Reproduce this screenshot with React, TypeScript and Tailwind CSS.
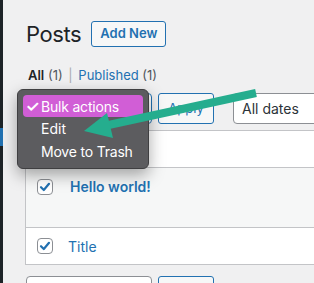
import React from 'react';

// small checkbox, checked state like WP list tables
const Checkbox = () => (
  <span className="flex h-[16px] w-[16px] items-center justify-center rounded-[4px] border border-[#8c8f94] bg-white">
    <svg width="12" height="12" viewBox="0 0 12 12">
      <path d="M2 6.2 L4.8 9 L10 2.8" fill="none" stroke="#2271b1" strokeWidth="2.2" strokeLinecap="round" strokeLinejoin="round" />
    </svg>
  </span>
);

const SelectBox = ({ label, className }: { label?: string; className?: string }) => (
  <div className={`flex h-[31px] items-center rounded-[4px] border border-[#8c8f94] bg-white pl-[8px] text-[14px] text-[#2c3338] ${className ?? ''}`}>
    {label}
  </div>
);

const ApplyButton = () => (
  <div className="flex h-[31px] w-[56px] items-center justify-center rounded-[3px] border border-[#2271b1] bg-[#f6f7f7] text-[13px] text-[#2271b1]">
    Apply
  </div>
);

export default function App() {
  return (
    <div className="relative flex h-[283px] w-[314px] overflow-hidden bg-[#f0f0f1] font-[Inter,sans-serif]">
      {/* admin menu edge */}
      <div className="flex w-[3px] shrink-0 flex-col bg-[#1d2327]">
        <div className="mt-[128px] h-[18px] bg-[#2271b1]" />
      </div>

      <main className="w-[420px] shrink-0 pl-[22px] pt-[21px]">
        <div className="flex items-center">
          <h1 className="ml-[1px] text-[22px] leading-[26px] tracking-[-0.4px] text-[#1d2327]">Posts</h1>
          <div className="ml-[10px] flex h-[26px] items-center rounded-[3px] border border-[#2271b1] bg-[#f6f7f7] px-[8px] text-[13px] font-semibold text-[#2271b1]">
            Add New
          </div>
        </div>

        <div className="ml-[3px] mt-[20px] text-[13px] leading-[16px] text-[#50575e]">
          <span className="font-semibold text-[#1d2327]">All</span> (1) <span className="px-[2px] text-[#a7aaad]">|</span>{' '}
          <span className="text-[#2271b1]">Published</span> (1)
        </div>

        <div className="ml-[1px] mt-[10px] flex items-center">
          <SelectBox className="w-[126px] border-[#2271b1]" />
          <div className="ml-[6px]">
            <ApplyButton />
          </div>
          <SelectBox label="All dates" className="ml-[19px] w-[140px]" />
        </div>

        <div className="mt-[6px] border border-[#c3c4c7] bg-white">
          <div className="flex h-[37px] items-center border-b border-[#c3c4c7] pl-[11px]">
            <Checkbox />
            <span className="ml-[15px] text-[14px] text-[#2271b1]">Title</span>
          </div>
          <div className="flex h-[59px] items-start bg-[#f6f7f7] pl-[11px] pt-[11px]">
            <Checkbox />
            <span className="ml-[17px] text-[14px] font-semibold leading-[16px] text-[#2271b1]">Hello world!</span>
          </div>
          <div className="flex h-[37px] items-center border-t border-[#c3c4c7] pl-[11px]">
            <Checkbox />
            <span className="ml-[15px] text-[14px] text-[#2271b1]">Title</span>
          </div>
        </div>

        <div className="ml-[1px] mt-[11px] flex items-center">
          <SelectBox className="w-[126px]" />
          <div className="ml-[6px]">
            <ApplyButton />
          </div>
        </div>
      </main>

      {/* open bulk actions menu */}
      <div className="absolute left-[17px] top-[89px] w-[132px] rounded-[6px] border border-[#3f3f41] bg-[#5c5c5f] px-[5px] py-[5px] text-[14px] text-white shadow-[0_6px_16px_rgba(0,0,0,0.35)]">
        <div className="flex h-[22px] items-center rounded-[4px] bg-[#d15ed6] pl-[1px]">
          <span className="w-[17px] text-center text-[16px] font-semibold leading-none">✓</span>
          <span className="tracking-[-0.2px]">Bulk actions</span>
        </div>
        <div className="flex h-[23px] items-center pl-[18px]">Edit</div>
        <div className="flex h-[23px] items-center pl-[18px] tracking-[-0.2px]">Move to Trash</div>
      </div>

      {/* annotation arrow */}
      <svg className="pointer-events-none absolute left-0 top-0" width="314" height="283" viewBox="0 0 314 283">
        <line x1="256" y1="93" x2="104" y2="126" stroke="#25ad8e" strokeWidth="8" />
        <polygon points="84,131 107,113 113,138" fill="#25ad8e" />
      </svg>
    </div>
  );
}
